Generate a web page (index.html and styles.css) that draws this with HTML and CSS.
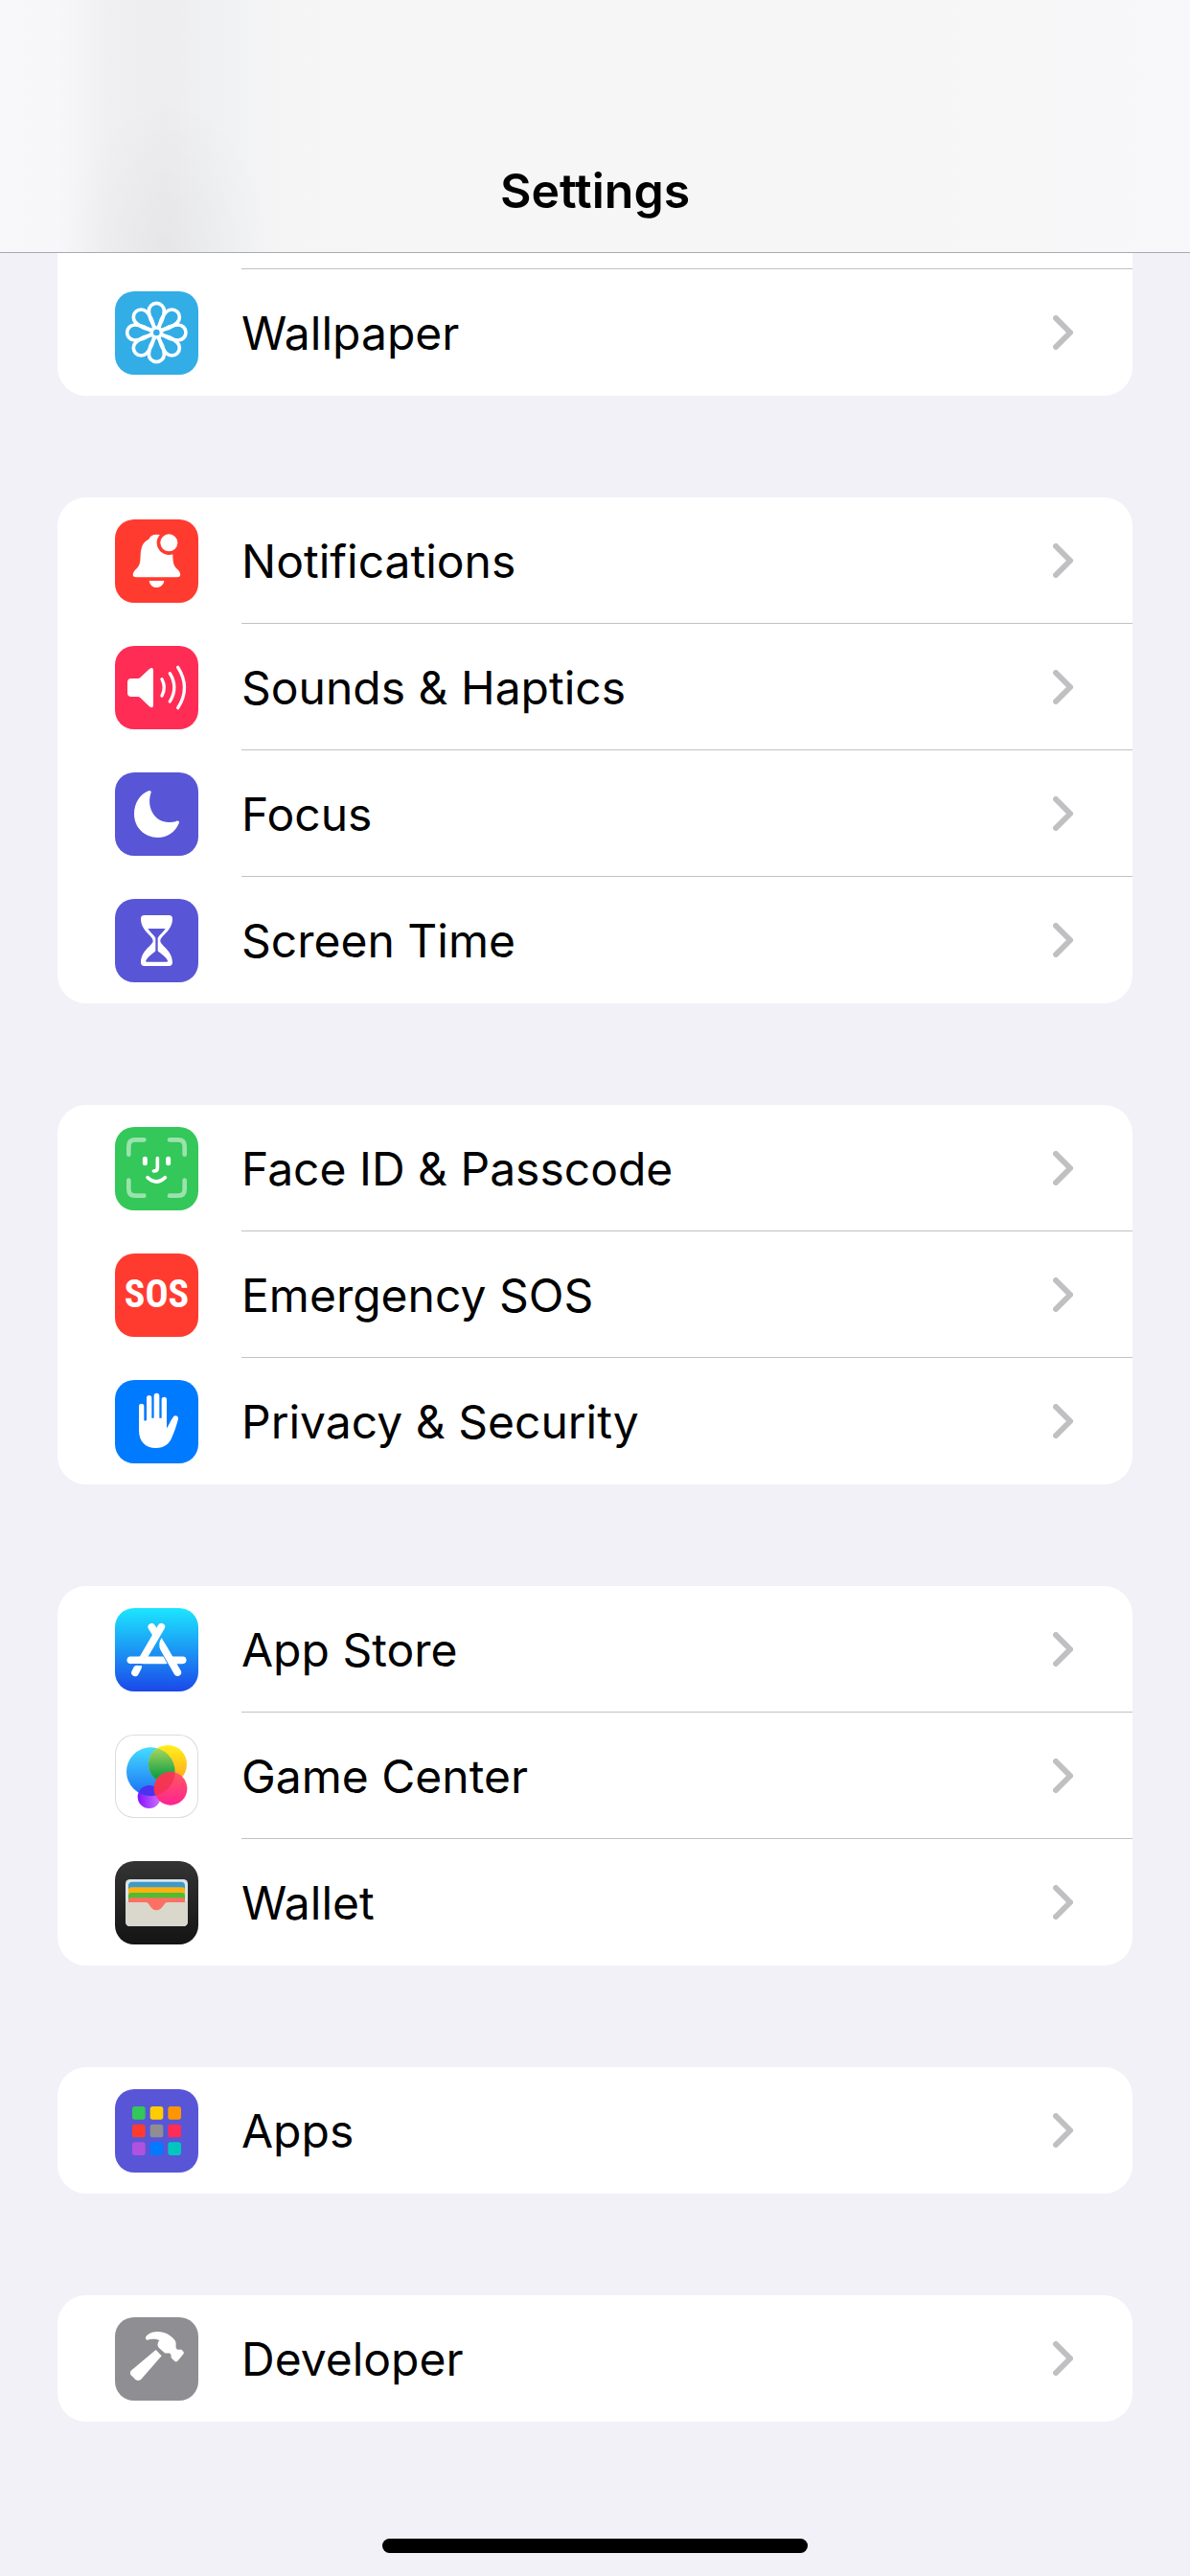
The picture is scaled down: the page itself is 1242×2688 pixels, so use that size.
FILE: index.html
```html
<!DOCTYPE html>
<html lang="en">
<head>
    <meta charset="UTF-8">
    <meta name="viewport" content="width=device-width, initial-scale=1.0">
    <title>Settings</title>
    <link rel="stylesheet" href="styles.css">
</head>
<body>
    <svg class="defs" width="0" height="0" aria-hidden="true">
        <symbol id="chevron" viewBox="0 0 21 36">
            <path d="M3 3L18 18L3 33" fill="none" stroke="#c0c0c2" stroke-width="6" stroke-linecap="round" stroke-linejoin="round"/>
        </symbol>
    </svg>

    <header class="navbar">
        <h1>Settings</h1>
    </header>

    <main class="settings">
        <ul class="group group-continued">
            <li><a class="row" href="#wallpaper">
                <span class="icon cyan">
                    <svg viewBox="0 0 261 261">
                        <defs>
                            <path id="petal" d="M-24 -68a24 24 0 0 1 48 0C24 -44 13 -26 0 -9C-13 -26 -24 -44 -24 -68Z"/>
                        </defs>
                        <g transform="translate(130 129)" fill="none" stroke="#fff" stroke-width="11">
                            <use href="#petal"/>
                            <use href="#petal" transform="rotate(45)"/>
                            <use href="#petal" transform="rotate(90)"/>
                            <use href="#petal" transform="rotate(135)"/>
                            <use href="#petal" transform="rotate(180)"/>
                            <use href="#petal" transform="rotate(225)"/>
                            <use href="#petal" transform="rotate(270)"/>
                            <use href="#petal" transform="rotate(315)"/>
                            <circle r="14" fill="#32ade6" stroke-width="8"/>
                        </g>
                    </svg>
                </span>
                <span class="label">Wallpaper <svg class="chevron"><use href="#chevron"/></svg></span>
            </a></li>
        </ul>

        <ul class="group">
            <li><a class="row" href="#notifications">
                <span class="icon red">
                    <svg viewBox="0 0 261 261">
                        <path fill="#fff" d="M67 181C50 181 56 164 66 156C80 143 79 130 80 112C81 84 90 68 106 62C110 52 118 47 130 47C143 47 151 52 155 62C171 68 180 84 181 112C182 130 181 143 195 156C205 164 211 181 194 181ZM107 192H154C152 205 143 213 130 213S109 205 107 192Z"/>
                        <circle cx="169" cy="73" r="38" fill="#ff3b30"/>
                        <circle cx="169" cy="73" r="27" fill="#fff"/>
                    </svg>
                </span>
                <span class="label">Notifications <svg class="chevron"><use href="#chevron"/></svg></span>
            </a></li>
            <li><a class="row" href="#sounds">
                <span class="icon pink">
                    <svg viewBox="0 0 261 261">
                        <path fill="#fff" d="M51 102H72Q76 102 79 99L108 72Q120 64 120 78V184Q120 198 108 190L79 162Q76 159 72 159H51Q39 159 39 147V114Q39 102 51 102Z"/>
                        <path fill="none" stroke="#fff" stroke-width="10" stroke-linecap="round" d="M147 104Q161 130 147 156M172 86Q199 130 172 174M197 67Q238 130 197 194"/>
                    </svg>
                </span>
                <span class="label">Sounds &amp; Haptics <svg class="chevron"><use href="#chevron"/></svg></span>
            </a></li>
            <li><a class="row" href="#focus">
                <span class="icon indigo">
                    <svg viewBox="0 0 261 261">
                        <path fill="#fff" d="M105 58C112 55 115 60 112 66C98 112 126 156 168 156C177 156 186 155 193 152C199 150 203 154 200 160C188 188 164 204 134 204C92 204 60 172 60 130C60 97 79 67 105 58Z"/>
                    </svg>
                </span>
                <span class="label">Focus <svg class="chevron"><use href="#chevron"/></svg></span>
            </a></li>
            <li><a class="row" href="#screen-time">
                <span class="icon indigo">
                    <svg viewBox="0 0 261 261">
                        <path fill="#fff" d="M92 51H169Q180 51 180 62C180 100 142 115 142 131C142 146 180 160 180 199Q180 210 169 210H92Q81 210 81 199C81 160 119 146 119 131C119 115 81 100 81 62Q81 51 92 51Z"/>
                        <path fill="#5856d6" d="M103 93H158C152 104 139 112 134 122V163C144 172 160 182 165 193Q166 197 162 197H99Q95 197 97 193C102 182 118 172 127 163V122C122 112 109 104 103 93Z"/>
                    </svg>
                </span>
                <span class="label">Screen Time <svg class="chevron"><use href="#chevron"/></svg></span>
            </a></li>
        </ul>

        <ul class="group">
            <li><a class="row" href="#face-id">
                <span class="icon green">
                    <svg viewBox="0 0 261 261" fill="none" stroke="#fff" stroke-linecap="round">
                        <path stroke-opacity=".5" stroke-width="14" d="M43 86V60Q43 40 63 40H91M171 40H198Q218 40 218 60V86M218 167V195Q218 215 198 215H171M91 215H63Q43 215 43 195V167"/>
                        <path stroke-width="15" d="M94 100V113M167 100V113"/>
                        <path stroke-width="11" d="M133 98V128Q133 138 121 138M102 158Q130 184 157 158"/>
                    </svg>
                </span>
                <span class="label">Face ID &amp; Passcode <svg class="chevron"><use href="#chevron"/></svg></span>
            </a></li>
            <li><a class="row" href="#sos">
                <span class="icon red sos">SOS</span>
                <span class="label">Emergency SOS <svg class="chevron"><use href="#chevron"/></svg></span>
            </a></li>
            <li><a class="row" href="#privacy">
                <span class="icon blue">
                    <svg viewBox="0 0 261 261">
                        <path fill="#fff" d="M75 82a8 8 0 0 1 16 0V127q4 2 8 -2V56a8 8 0 0 1 16 0V119h7V50a8 8 0 0 1 17 0V119h7V61a8 8 0 0 1 16 0V151c5 -6 11 -22 20 -35c6 -8 18 -4 16 6c-6 22 -12 40 -20 58c-8 20 -24 33 -50 33c-33 0 -53 -22 -53 -55z"/>
                    </svg>
                </span>
                <span class="label">Privacy &amp; Security <svg class="chevron"><use href="#chevron"/></svg></span>
            </a></li>
        </ul>

        <ul class="group">
            <li><a class="row" href="#app-store">
                <span class="icon app-store">
                    <svg viewBox="0 0 261 261">
                        <defs>
                            <mask id="gap" maskUnits="userSpaceOnUse" x="0" y="0" width="261" height="261">
                                <path fill="#fff" d="M0 0H261V261H0Z"/>
                                <path stroke="#000" stroke-width="34" d="M145 105L205 213"/>
                                <path fill="#000" d="M50 174H90L78 181Q66 176 58 184L40 190Z"/>
                            </mask>
                        </defs>
                        <g mask="url(#gap)" stroke="#fff" stroke-width="23" stroke-linecap="round">
                            <path d="M145 59L84 163M72 185L63 202"/>
                            <path d="M49 163H160"/>
                        </g>
                        <path stroke="#fff" stroke-width="23" stroke-linecap="round" d="M115 59L127 79M180 163H212"/>
                        <path fill="#fff" d="M146 93Q133 111 143 132L186 208A12 12 0 0 0 207 197L161 118Q152 104 146 93Z"/>
                    </svg>
                </span>
                <span class="label">App Store <svg class="chevron"><use href="#chevron"/></svg></span>
            </a></li>
            <li><a class="row" href="#game-center">
                <span class="icon game-center">
                    <svg viewBox="0 0 261 261">
                        <defs>
                            <linearGradient id="gc-blue" x2="0" y2="1"><stop stop-color="#45dcff"/><stop offset="1" stop-color="#1a6ff5"/></linearGradient>
                            <linearGradient id="gc-yellow" x2="0" y2="1"><stop stop-color="#fff01a"/><stop offset="1" stop-color="#ffa01e"/></linearGradient>
                            <linearGradient id="gc-green" x2="0" y2="1"><stop stop-color="#b4dc60"/><stop offset=".8" stop-color="#17a046"/></linearGradient>
                            <linearGradient id="gc-purple" x2="1" y2="0"><stop stop-color="#8212ff"/><stop offset="1" stop-color="#d070ff"/></linearGradient>
                            <linearGradient id="gc-red" x2="0" y2="1"><stop stop-color="#ff5a62"/><stop offset="1" stop-color="#ff2290"/></linearGradient>
                            <clipPath id="in-blue"><circle cx="112" cy="116" r="76"/></clipPath>
                        </defs>
                        <circle cx="107" cy="195" r="36" fill="url(#gc-purple)"/>
                        <circle cx="112" cy="116" r="76" fill="url(#gc-blue)"/>
                        <circle cx="165" cy="93" r="60" fill="url(#gc-yellow)"/>
                        <g clip-path="url(#in-blue)">
                            <circle cx="165" cy="93" r="60" fill="url(#gc-green)"/>
                            <circle cx="107" cy="195" r="36" fill="#4a32ee"/>
                        </g>
                        <circle cx="174" cy="169" r="52" fill="url(#gc-red)"/>
                        <circle cx="174" cy="169" r="52" fill="#f0304a" fill-opacity=".75" clip-path="url(#in-blue)"/>
                    </svg>
                </span>
                <span class="label">Game Center <svg class="chevron"><use href="#chevron"/></svg></span>
            </a></li>
            <li><a class="row" href="#wallet">
                <span class="icon wallet">
                    <svg viewBox="0 0 261 261">
                        <rect x="33" y="57" width="195" height="147" rx="14" fill="#dbe5e8"/>
                        <path fill="#3d9acb" d="M42 77Q42 65 54 65H207Q219 65 219 77V100H42Z"/>
                        <path fill="#ffb20f" d="M42 92Q42 82 52 82H209Q219 82 219 92V112H42Z"/>
                        <path fill="#4fbd31" d="M42 109Q42 99 52 99H209Q219 99 219 109V125H42Z"/>
                        <path fill="#fc7063" d="M42 125Q42 115 52 115H209Q219 115 219 125V160H42Z"/>
                        <path fill="#dad7cd" d="M33 120L42 129H96C110 129 110 154 130 154S151 129 165 129H219L228 120V190Q228 204 214 204H47Q33 204 33 190Z"/>
                    </svg>
                </span>
                <span class="label">Wallet <svg class="chevron"><use href="#chevron"/></svg></span>
            </a></li>
        </ul>

        <ul class="group">
            <li><a class="row" href="#apps">
                <span class="icon indigo">
                    <svg viewBox="0 0 261 261">
                        <rect x="54" y="54" width="41" height="41" rx="8" fill="#34c759"/>
                        <rect x="110" y="54" width="41" height="41" rx="8" fill="#ffcc00"/>
                        <rect x="166" y="54" width="41" height="41" rx="8" fill="#ff9500"/>
                        <rect x="54" y="110" width="41" height="41" rx="8" fill="#ff3b30"/>
                        <rect x="110" y="110" width="41" height="41" rx="8" fill="#8e8e93"/>
                        <rect x="166" y="110" width="41" height="41" rx="8" fill="#ff2d55"/>
                        <rect x="54" y="166" width="41" height="41" rx="8" fill="#af52de"/>
                        <rect x="110" y="166" width="41" height="41" rx="8" fill="#007aff"/>
                        <rect x="166" y="166" width="41" height="41" rx="8" fill="#00c7be"/>
                    </svg>
                </span>
                <span class="label">Apps <svg class="chevron"><use href="#chevron"/></svg></span>
            </a></li>
        </ul>

        <ul class="group">
            <li><a class="row" href="#developer">
                <span class="icon gray">
                    <svg viewBox="0 0 261 261" fill="#fff">
                        <path d="M97 69C91 60 108 45 134 45C156 45 176 56 188 73C194 82 188 92 193 99C198 104 204 99 209 102L214 107C217 111 215 115 212 118L196 137C192 140 188 140 185 136L177 128C174 123 178 119 173 114C168 110 160 116 154 110L137 95C131 88 134 78 139 73C128 66 112 68 103 71Q99 72 97 69Z"/>
                        <path d="M128 102L146 121L82 194Q73 202 64 195L50 181Q44 173 52 166Z"/>
                    </svg>
                </span>
                <span class="label">Developer <svg class="chevron"><use href="#chevron"/></svg></span>
            </a></li>
        </ul>
    </main>

    <div class="home-indicator"></div>
</body>
</html>
```

FILE: styles.css
```css
* {
    box-sizing: border-box;
}

body {
    font-family: Inter, "Liberation Sans", sans-serif;
    font-size: 48px;
    line-height: 60px;
    color: #000;
    background-color: #f2f1f8;
    margin: 0;
    min-height: 100vh;
    display: flex;
    flex-direction: column;
}

.defs {
    position: absolute;
}

.navbar {
    height: 264px;
    display: flex;
    justify-content: center;
    align-items: flex-end;
    padding-bottom: 34px;
    border-bottom: 1px solid #a9a9ae;
    background:
        radial-gradient(ellipse 110px 160px at 14% 100%, rgba(0, 0, 0, 0.03), transparent),
        linear-gradient(to right, #f8f8fb 0%, #f7f7f9 5%, #f0f0f2 9%, #ededef 14%, #f0f1f3 18%, #f5f5f6 24%, #f6f6f6 34%, #f6f6f6 80%, #f8f8fb 100%);
}

h1 {
    font-size: 50px;
    font-weight: 600;
    margin: 0;
}

.settings {
    padding: 0 60px;
    display: flex;
    flex-direction: column;
    gap: 106px;
}

.group {
    list-style: none;
    margin: 0;
    padding: 0;
    background-color: #fff;
    border-radius: 30px;
}

.group-continued {
    border-radius: 0 0 30px 30px;
}

.group-continued::before {
    content: "";
    display: block;
    height: 16px;
    margin-left: 192px;
    border-bottom: 1px solid #c2c2c5;
}

.row {
    display: flex;
    align-items: center;
    gap: 45px;
    height: 132px;
    padding-left: 60px;
    color: inherit;
    text-decoration: none;
}

.label {
    flex: 1;
    height: 100%;
    display: flex;
    justify-content: space-between;
    align-items: center;
    padding: 3px 62px 0 0;
    border-bottom: 1px solid #c2c2c5;
}

li:last-child .label {
    border-bottom-color: transparent;
}

.chevron {
    width: 21px;
    height: 36px;
    margin-bottom: 3px;
}

.icon {
    width: 87px;
    height: 87px;
    border-radius: 20px;
    overflow: hidden;
}

.icon svg {
    display: block;
    width: 100%;
    height: 100%;
}

.cyan { background-color: #32ade6; }
.red { background-color: #ff3b30; }
.pink { background-color: #ff2d55; }
.indigo { background-color: #5856d6; }
.green { background-color: #34c759; }
.blue { background-color: #007aff; }
.gray { background-color: #8e8e93; }

.sos {
    display: flex;
    justify-content: center;
    align-items: center;
    color: #fff;
    font-family: "Liberation Sans Narrow", "Roboto Condensed", "Liberation Sans", sans-serif;
    font-size: 40px;
    font-weight: 700;
}

.app-store {
    background: linear-gradient(#1ce6ff, #1b48ea);
}

.game-center {
    background-color: #fff;
    box-shadow: inset 0 0 0 1px #dcdcdc;
}

.wallet {
    background: linear-gradient(#343434, #141414);
}

.home-indicator {
    width: 444px;
    max-width: 60%;
    height: 15px;
    margin: auto auto 24px;
    border-radius: 8px;
    background-color: #000;
}
```
